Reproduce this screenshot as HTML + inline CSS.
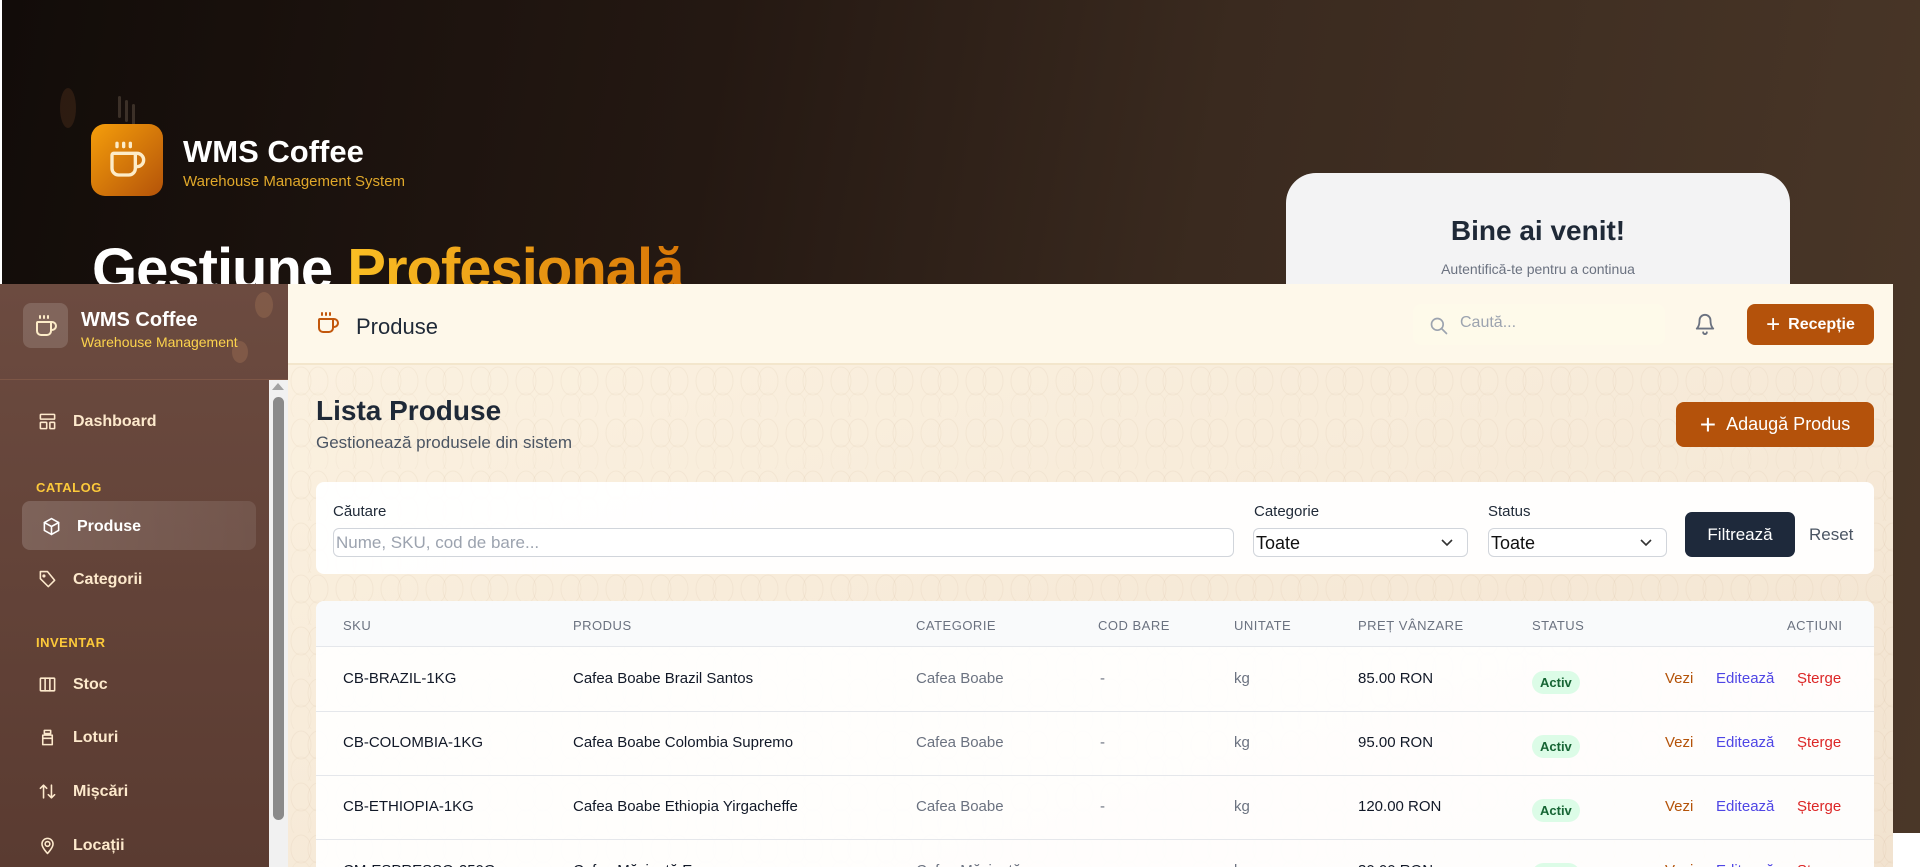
<!DOCTYPE html>
<html><head><meta charset="utf-8"><style>
*{box-sizing:border-box;margin:0;padding:0}
body{width:1920px;height:867px;overflow:hidden;background:#fff;font-family:"Liberation Sans",sans-serif;position:relative}
.login{position:absolute;left:2px;top:0;width:1918px;height:833px;background:linear-gradient(100deg,#120c09 0%,#241812 35%,#3a2a1f 60%,#4a3728 100%)}
.abs{position:absolute}
.app{position:absolute;left:0;top:284px;width:1893px;height:583px;background:#f6ebda;overflow:hidden}
.side{position:absolute;left:0;top:0;width:288px;height:583px;background:linear-gradient(180deg,#6c4b40,#5a3b31)}
.nav{position:absolute;left:38px;color:#fde9cc;font-size:16px;font-weight:bold;display:flex;align-items:center;gap:16px}
.nav svg{width:19px;height:19px;fill:none;stroke:#fde9cc;stroke-width:2;stroke-linecap:round;stroke-linejoin:round}
.sec{position:absolute;left:36px;color:#fcc93a;font-size:13px;font-weight:bold;letter-spacing:.5px}
.main{position:absolute;left:288px;top:0;right:0;bottom:0}
.th{position:absolute;top:133px;font-size:13px;color:#6b7280;letter-spacing:.5px}
.cell{position:absolute;font-size:15px;color:#111827}
.g{color:#6b7280}
.badge{position:absolute;background:#dcfce7;color:#166534;font-weight:bold;font-size:13px;border-radius:12px;padding:4px 8px}
.chev{position:absolute;right:14px;top:9px}
</style></head><body>
<div class="login">
  <div class="abs" style="left:58px;top:88px;width:16px;height:40px;border-radius:50%;background:rgba(120,70,40,.25)"></div>
  <div class="abs" style="left:116px;top:96px;width:3px;height:22px;background:rgba(150,130,110,.3);border-radius:2px;box-shadow:7px 4px 0 rgba(150,130,110,.3),14px 8px 0 rgba(150,130,110,.3)"></div>
  <div class="abs" style="left:89px;top:124px;width:72px;height:72px;border-radius:14px;background:linear-gradient(135deg,#f59e0b,#b45309);display:flex;align-items:center;justify-content:center">
    <svg width="40" height="40" viewBox="0 0 24 24" fill="none" stroke="#fdecc8" stroke-width="2" stroke-linecap="round" stroke-linejoin="round"><path d="M10 2v2M14 2v2M6 2v2M16 8a1 1 0 0 1 1 1v8a4 4 0 0 1-4 4H7a4 4 0 0 1-4-4V9a1 1 0 0 1 1-1h14a4 4 0 1 1 0 8h-1"/></svg>
  </div>
  <div class="abs" style="left:181px;top:134px;color:#fff;font-size:31px;font-weight:bold">WMS Coffee</div>
  <div class="abs" style="left:181px;top:173px;color:#e0a82a;font-size:15px">Warehouse Management System</div>
  <div class="abs" style="left:90px;top:236px;font-size:58px;font-weight:900;color:#fff;white-space:nowrap;letter-spacing:-1px">Gestiune <span style="background:linear-gradient(90deg,#fbbf24,#d97706);-webkit-background-clip:text;color:transparent">Profesională</span></div>
  <div class="abs" style="left:1414px;top:188px;width:14px;height:30px;border-radius:50%;background:rgba(120,70,40,.35)"></div>
  <div class="abs" style="left:1284px;top:173px;width:504px;height:200px;border-radius:30px;background:#f3f3f4;text-align:center">
    <div style="margin-top:42px;font-size:28px;font-weight:bold;color:#1f2937">Bine ai venit!</div>
    <div style="margin-top:14px;font-size:14px;color:#6b7280">Autentifică-te pentru a continua</div>
  </div>
</div>
<div class="app">
  <div class="side">
    <div class="abs" style="left:255px;top:8px;width:18px;height:26px;border-radius:50%;background:rgba(150,105,80,.5)"></div>
    <div class="abs" style="left:232px;top:57px;width:16px;height:22px;border-radius:50%;background:rgba(150,105,80,.5)"></div>
    <div class="abs" style="left:23px;top:19px;width:45px;height:45px;border-radius:8px;background:rgba(255,255,255,.15);display:flex;align-items:center;justify-content:center">
      <svg width="24" height="24" viewBox="0 0 24 24" fill="none" stroke="#fdecc8" stroke-width="2" stroke-linecap="round" stroke-linejoin="round"><path d="M10 2v2M14 2v2M6 2v2M16 8a1 1 0 0 1 1 1v8a4 4 0 0 1-4 4H7a4 4 0 0 1-4-4V9a1 1 0 0 1 1-1h14a4 4 0 1 1 0 8h-1"/></svg>
    </div>
    <div class="abs" style="left:81px;top:25px;color:#fff;font-size:20px;font-weight:bold">WMS Coffee</div>
    <div class="abs" style="left:81px;top:50px;color:#fcd34d;font-size:14px">Warehouse Management</div>
    <div class="abs" style="left:0;top:95px;width:288px;height:1px;background:#7d5646"></div>
    <div class="abs" style="left:269px;top:96px;width:19px;height:487px;background:#f1f1f1"></div>
    <div class="abs" style="left:272px;top:99px;width:0;height:0;border-left:6px solid transparent;border-right:6px solid transparent;border-bottom:7px solid #a3a3a3"></div>
    <div class="abs" style="left:273px;top:113px;width:11px;height:423px;border-radius:6px;background:#8a8a8a"></div>
    <div class="nav" style="top:128px"><svg viewBox="0 0 24 24"><rect x="3" y="3" width="18" height="6" rx="1"/><rect x="3" y="13" width="8" height="8" rx="1"/><rect x="15" y="13" width="6" height="8" rx="1"/></svg>Dashboard</div>
    <div class="sec" style="top:196px">CATALOG</div>
    <div class="abs" style="left:22px;top:217px;width:234px;height:49px;border-radius:8px;background:linear-gradient(90deg,rgba(255,255,255,.16),rgba(255,255,255,.09))"></div>
    <div class="nav" style="top:233px;left:42px;color:#fff"><svg viewBox="0 0 24 24" style="stroke:#fff"><path d="M12 2l9 5v10l-9 5-9-5V7z"/><path d="M3 7l9 5 9-5M12 12v10"/></svg>Produse</div>
    <div class="nav" style="top:286px"><svg viewBox="0 0 24 24"><path d="M12 2H3v9l10 10 8-8z"/><circle cx="7.5" cy="7.5" r="1"/></svg>Categorii</div>
    <div class="sec" style="top:351px">INVENTAR</div>
    <div class="nav" style="top:391px"><svg viewBox="0 0 24 24"><rect x="3" y="4" width="18" height="16" rx="1"/><path d="M9 4v16M15 4v16"/></svg>Stoc</div>
    <div class="nav" style="top:444px"><svg viewBox="0 0 24 24"><path d="M8 3h8v4H8zM6 9h12v12H6zM6 13h12"/></svg>Loturi</div>
    <div class="nav" style="top:498px"><svg viewBox="0 0 24 24"><path d="M7 20V4M3 8l4-4 4 4M17 4v16M13 16l4 4 4-4"/></svg>Mișcări</div>
    <div class="nav" style="top:552px"><svg viewBox="0 0 24 24"><path d="M12 22s7-7 7-12a7 7 0 0 0-14 0c0 5 7 12 7 12z"/><circle cx="12" cy="10" r="3"/></svg>Locații</div>
  </div>
  <div class="main">
    <svg class="abs" style="left:0;top:81px" width="1605" height="502"><defs><pattern id="p" width="45" height="52" patternUnits="userSpaceOnUse"><ellipse cx="13" cy="16" rx="10" ry="14" fill="none" stroke="rgba(170,130,90,.07)"/><ellipse cx="30" cy="16" rx="10" ry="14" fill="none" stroke="rgba(170,130,90,.07)"/><ellipse cx="13" cy="42" rx="10" ry="14" fill="none" stroke="rgba(170,130,90,.05)"/><ellipse cx="30" cy="42" rx="10" ry="14" fill="none" stroke="rgba(170,130,90,.05)"/></pattern><linearGradient id="bg" x1="0" x2="1" y1="0" y2="1"><stop offset="0" stop-color="#fbf1e0"/><stop offset="1" stop-color="#f2e3d0"/></linearGradient></defs><rect width="1605" height="502" fill="url(#bg)"/><rect width="1605" height="502" fill="url(#p)"/></svg>
    <div class="abs" style="left:0;top:0;width:1605px;height:81px;background:#fef8ea;border-bottom:2px solid #f3e6cc"></div>
    <svg class="abs" style="left:28px;top:27px" width="24" height="24" viewBox="0 0 24 24" fill="none" stroke="#c2570c" stroke-width="2" stroke-linecap="round" stroke-linejoin="round"><path d="M10 2v2M14 2v2M6 2v2M16 8a1 1 0 0 1 1 1v8a4 4 0 0 1-4 4H7a4 4 0 0 1-4-4V9a1 1 0 0 1 1-1h14a4 4 0 1 1 0 8h-1"/></svg>
    <div class="abs" style="left:68px;top:30px;font-size:22px;color:#1f2937">Produse</div>
    <div class="abs" style="left:1125px;top:20px;width:252px;height:41px;border-radius:8px;background:#fefaea"></div>
    <svg class="abs" style="left:1141px;top:32px" width="20" height="20" viewBox="0 0 24 24" fill="none" stroke="#9ca3af" stroke-width="2" stroke-linecap="round"><circle cx="10" cy="10" r="7"/><path d="M15 15l6 6"/></svg>
    <div class="abs" style="left:1172px;top:30px;font-size:16px;color:#9ca3af">Caută...</div>
    <svg class="abs" style="left:1406px;top:29px" width="22" height="22" viewBox="0 0 24 24" fill="none" stroke="#6b7280" stroke-width="2" stroke-linecap="round" stroke-linejoin="round"><path d="M6 8a6 6 0 0 1 12 0c0 7 3 9 3 9H3s3-2 3-9M10 21a2 2 0 0 0 4 0"/></svg>
    <div class="abs" style="left:1459px;top:20px;width:127px;height:41px;border-radius:8px;background:#b4520b;color:#fff;font-size:16px;font-weight:bold;display:flex;align-items:center;justify-content:center;gap:8px"><span style="font-size:24px;font-weight:normal;line-height:1">+</span>Recepție</div>
    <div class="abs" style="left:28px;top:111px;font-size:28px;font-weight:bold;color:#1f2937">Lista Produse</div>
    <div class="abs" style="left:28px;top:149px;font-size:17px;color:#4b5563">Gestionează produsele din sistem</div>
    <div class="abs" style="left:1388px;top:118px;width:198px;height:45px;border-radius:8px;background:#b4520b;color:#fff;font-size:18px;display:flex;align-items:center;justify-content:center;gap:10px"><span style="font-size:28px;line-height:1">+</span>Adaugă Produs</div>
    <div class="abs" style="left:28px;top:198px;width:1558px;height:92px;border-radius:8px;background:rgba(255,255,255,.95)"></div>
    <div class="abs" style="left:45px;top:219px;font-size:15px;color:#1f2937">Căutare</div>
    <div class="abs" style="left:45px;top:244px;width:901px;height:29px;border:1px solid #d1d5db;border-radius:6px;background:#fff;font-size:17px;color:#9ca3af;padding:4px 2px">Nume, SKU, cod de bare...</div>
    <div class="abs" style="left:966px;top:219px;font-size:15px;color:#1f2937">Categorie</div>
    <div class="abs" style="left:965px;top:244px;width:215px;height:29px;border:1px solid #d1d5db;border-radius:6px;background:#fff;font-size:18px;color:#111;padding:4px 2px">Toate<svg class="chev" width="12" height="10" viewBox="0 0 12 10" fill="none" stroke="#333" stroke-width="1.6"><path d="M1 2l5 5 5-5"/></svg></div>
    <div class="abs" style="left:1200px;top:219px;font-size:15px;color:#1f2937">Status</div>
    <div class="abs" style="left:1200px;top:244px;width:179px;height:29px;border:1px solid #d1d5db;border-radius:6px;background:#fff;font-size:18px;color:#111;padding:4px 2px">Toate<svg class="chev" width="12" height="10" viewBox="0 0 12 10" fill="none" stroke="#333" stroke-width="1.6"><path d="M1 2l5 5 5-5"/></svg></div>
    <div class="abs" style="left:1397px;top:228px;width:110px;height:45px;border-radius:7px;background:#1e293b;color:#fff;font-size:17px;display:flex;align-items:center;justify-content:center">Filtrează</div>
    <div class="abs" style="left:1521px;top:241px;font-size:17px;color:#4b5563">Reset</div>
    <div class="abs" style="left:28px;top:317px;width:1558px;height:300px;border-radius:8px 8px 0 0;background:rgba(255,255,255,.92);overflow:hidden">
      <div style="height:46px;background:rgba(248,249,251,.9);border-bottom:1px solid #e5e7eb"></div>
      <div style="position:absolute;top:110px;left:0;right:0;border-top:1px solid #e5e7eb"></div>
      <div style="position:absolute;top:174px;left:0;right:0;border-top:1px solid #e5e7eb"></div>
      <div style="position:absolute;top:238px;left:0;right:0;border-top:1px solid #e5e7eb"></div>
    </div>
    <div class="th" style="left:55px;top:334px">SKU</div>
    <div class="th" style="left:285px;top:334px">PRODUS</div>
    <div class="th" style="left:628px;top:334px">CATEGORIE</div>
    <div class="th" style="left:810px;top:334px">COD BARE</div>
    <div class="th" style="left:946px;top:334px">UNITATE</div>
    <div class="th" style="left:1070px;top:334px">PREȚ VÂNZARE</div>
    <div class="th" style="left:1244px;top:334px">STATUS</div>
    <div class="th" style="left:1499px;top:334px">ACȚIUNI</div>

    <div class="cell" style="left:55px;top:386px">CB-BRAZIL-1KG</div><div class="cell" style="left:285px;top:386px">Cafea Boabe Brazil Santos</div><div class="cell g" style="left:628px;top:386px">Cafea Boabe</div><div class="cell g" style="left:812px;top:386px">-</div><div class="cell g" style="left:946px;top:386px">kg</div><div class="cell" style="left:1070px;top:386px">85.00 RON</div><div class="badge" style="left:1244px;top:387px">Activ</div><div class="cell" style="left:1377px;top:386px;color:#b45309">Vezi</div><div class="cell" style="left:1428px;top:386px;color:#4f46e5">Editează</div><div class="cell" style="left:1509px;top:386px;color:#dc2626">Șterge</div>

    <div class="cell" style="left:55px;top:450px">CB-COLOMBIA-1KG</div><div class="cell" style="left:285px;top:450px">Cafea Boabe Colombia Supremo</div><div class="cell g" style="left:628px;top:450px">Cafea Boabe</div><div class="cell g" style="left:812px;top:450px">-</div><div class="cell g" style="left:946px;top:450px">kg</div><div class="cell" style="left:1070px;top:450px">95.00 RON</div><div class="badge" style="left:1244px;top:451px">Activ</div><div class="cell" style="left:1377px;top:450px;color:#b45309">Vezi</div><div class="cell" style="left:1428px;top:450px;color:#4f46e5">Editează</div><div class="cell" style="left:1509px;top:450px;color:#dc2626">Șterge</div>

    <div class="cell" style="left:55px;top:514px">CB-ETHIOPIA-1KG</div><div class="cell" style="left:285px;top:514px">Cafea Boabe Ethiopia Yirgacheffe</div><div class="cell g" style="left:628px;top:514px">Cafea Boabe</div><div class="cell g" style="left:812px;top:514px">-</div><div class="cell g" style="left:946px;top:514px">kg</div><div class="cell" style="left:1070px;top:514px">120.00 RON</div><div class="badge" style="left:1244px;top:515px">Activ</div><div class="cell" style="left:1377px;top:514px;color:#b45309">Vezi</div><div class="cell" style="left:1428px;top:514px;color:#4f46e5">Editează</div><div class="cell" style="left:1509px;top:514px;color:#dc2626">Șterge</div>

    <div class="cell" style="left:55px;top:578px">CM-ESPRESSO-250G</div><div class="cell" style="left:285px;top:578px">Cafea Măcinată Espresso</div><div class="cell g" style="left:628px;top:578px">Cafea Măcinată</div><div class="cell g" style="left:946px;top:578px">kg</div><div class="cell" style="left:1070px;top:578px">30.00 RON</div><div class="badge" style="left:1244px;top:579px">Activ</div><div class="cell" style="left:1377px;top:578px;color:#b45309">Vezi</div><div class="cell" style="left:1428px;top:578px;color:#4f46e5">Editează</div><div class="cell" style="left:1509px;top:578px;color:#dc2626">Șterge</div>
  </div>
</div>
</body></html>
